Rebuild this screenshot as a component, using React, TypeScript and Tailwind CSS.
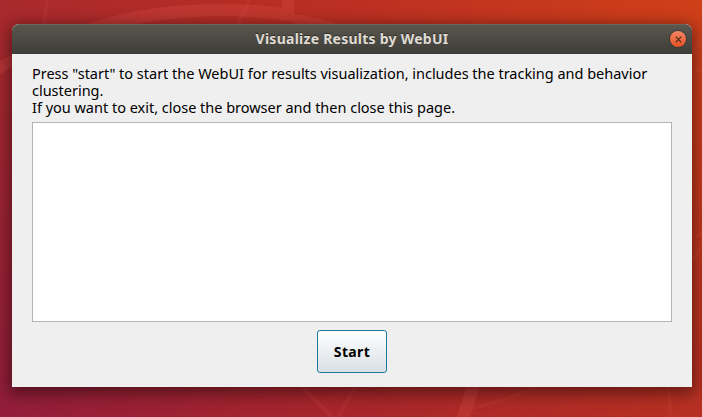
function Wallpaper() {
  return (
    <svg className="absolute inset-0 h-full w-full" viewBox="0 0 702 417" preserveAspectRatio="none" aria-hidden="true">
      <defs>
        <linearGradient id="top" x1="0" x2="1" y1="0" y2="0">
          <stop offset="0" stopColor="#aa2a2d" />
          <stop offset=".5" stopColor="#bc3023" />
          <stop offset="1" stopColor="#d04019" />
        </linearGradient>
        <linearGradient id="bottom" x1="0" x2="1" y1="0" y2="0">
          <stop offset="0" stopColor="#911d3b" />
          <stop offset=".5" stopColor="#a8262b" />
          <stop offset="1" stopColor="#b73023" />
        </linearGradient>
        <linearGradient id="fade" x1="0" x2="0" y1="0" y2="1">
          <stop offset="0" stopColor="#000" />
          <stop offset="1" stopColor="#fff" />
        </linearGradient>
        <mask id="lower"><rect width="702" height="417" fill="url(#fade)" /></mask>
      </defs>
      <rect width="702" height="417" fill="url(#top)" />
      <rect width="702" height="417" fill="url(#bottom)" mask="url(#lower)" />
      <g fill="#e85a50" fillOpacity=".22">
        <path d="M87 24Q145 4 220 4Q257 4 282 8V0H294V14Q320 18 340 24H294V22L282 20Q252 16 215 16Q175 17 138 24Z" />
        <path d="M0 61L12 55V67L0 75Z" />
        <path d="M466 387H480L470 417H457Z" />
      </g>
      <g fill="#e85a50" fillOpacity=".12">
        <path d="M45 0H49L46 24H42ZM247 0H251L240 24H236Z" />
        <path d="M299 387H305L336 417H329ZM353 387H357L341 417H336Z" />
        <path d="M532 387H541Q510 401 472 410L474 406Q505 399 532 387ZM666 387H670L673 417H669Z" />
        <path d="M692 42L702 32V44L692 58ZM692 70L702 66V71L692 74ZM692 238L702 231V236L692 241ZM692 256L702 243V249L692 265Z" />
      </g>
    </svg>
  );
}

function CloseButton() {
  return (
    <button aria-label="Close" className="flex size-4 items-center justify-center rounded-full bg-linear-to-b from-[#f58563] to-[#e5501f] shadow-[0_0_0_1px_#3a3832]">
      <svg className="size-[7px]" viewBox="0 0 7 7" fill="none" stroke="#4b2a1a" strokeWidth="1.2" aria-hidden="true">
        <path d="M.7 .7L6.3 6.3M6.3 .7L.7 6.3" />
      </svg>
    </button>
  );
}

export default function App() {
  return (
    <div className="relative h-[417px] w-[702px] overflow-hidden px-3 pt-6 font-['Noto_Sans',sans-serif] text-black">
      <Wallpaper />
      <main className="relative flex h-[363px] w-[680px] flex-col rounded-t-[7px] bg-[#efefef] shadow-[0_4px_16px_3px_rgba(0,0,0,0.45)]">
        <header className="grid h-[30px] shrink-0 grid-cols-[1fr_auto_1fr] items-center rounded-t-[7px] border-t border-[#69665e] bg-linear-to-b from-[#59564e] to-[#3e3d38] px-1.5 pb-px">
          <h1 className="col-start-2 text-[14px] leading-[20px] font-bold tracking-[0.25px] whitespace-nowrap text-[#dfdbd2] [text-shadow:0_-1px_0_#302f2b]">Visualize Results by WebUI</h1>
          <div className="flex justify-end"><CloseButton /></div>
        </header>
        <section className="flex grow flex-col px-5 pt-[11px]">
          <p className="h-[57px] text-[14.5px] leading-[17px] tracking-[-0.013px] whitespace-nowrap">
            Press "start" to start the WebUI for results visualization, includes the tracking and behavior
            <br />
            clustering.
            <br />
            If you want to exit, close the browser and then close this page.
          </p>
          <div className="h-[200px] border border-[#b5b5b5] bg-white" />
          <button className="mt-2 h-[43px] w-[70px] self-center rounded-[3px] border border-[#23759e] bg-linear-to-b from-white to-[#d9e0e6] text-[14px] font-bold tracking-[0.35px]">Start</button>
        </section>
      </main>
    </div>
  );
}
